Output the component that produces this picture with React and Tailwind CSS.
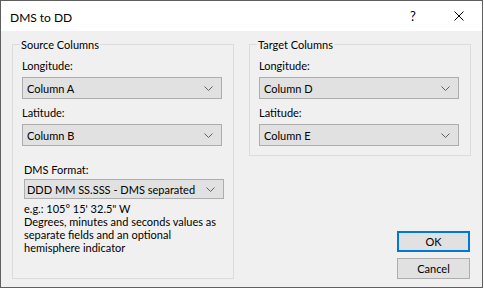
function Chevron() {
  return (
    <svg width="9" height="5" viewBox="0 0 9 5" className="shrink-0">
      <path d="M0.5 0.5 L4.5 4.5 L8.5 0.5" fill="none" stroke="#606060" strokeWidth="1" />
    </svg>
  );
}

function Combo({ value, className = "" }) {
  return (
    <div
      className={`w-[200px] bg-[#e1e1e1] border border-[#adadad] flex items-center justify-between pr-[8px] ${className}`}
    >
      <span className="whitespace-nowrap">{value}</span>
      <Chevron />
    </div>
  );
}

function Group({ title, className = "", children }) {
  return (
    <div className={`relative w-[222px] border border-[#dcdcdc] ${className}`}>
      <span className="absolute top-[-7px] left-[7px] px-[1px] bg-[#f0f0f0] whitespace-nowrap">
        {title}
      </span>
      {children}
    </div>
  );
}

function Field({ label, value, first }) {
  return (
    <div className={`flex flex-col ${first ? "" : "mt-[7px]"}`}>
      <span className="h-[13px]">{label}</span>
      <Combo value={value} className="mt-[5px] h-[22px] pl-[4px]" />
    </div>
  );
}

export default function App() {
  return (
    <div className="w-[484px] h-[289px] bg-white font-['Lato','Noto_Sans',sans-serif] text-[11px] leading-[13px] text-black">
      <div className="w-[483px] h-[288px] border border-[#5f5f5f] flex flex-col bg-[#f0f0f0]">
        <div className="h-[30px] bg-white flex items-center shrink-0">
          <span className="pl-[9px] text-[12px] leading-[15px] pt-[2px]">DMS to DD</span>
          <div className="ml-auto flex h-full">
            <div className="w-[46px] h-full flex items-center justify-center text-[13px] pt-[1px]">?</div>
            <div className="w-[46px] h-full flex items-center justify-center">
              <svg width="10" height="10" viewBox="0 0 10 10">
                <path d="M0.5 0.5 L9.5 9.5 M9.5 0.5 L0.5 9.5" stroke="#000" strokeWidth="1" fill="none" />
              </svg>
            </div>
          </div>
        </div>
        <div className="flex-1 flex pl-[11px] pt-[13px]">
          <Group title="Source Columns" className="h-[235px]">
            <div className="flex flex-col pl-[9px] pt-[14px]">
              <Field label="Longitude:" value="Column A" first />
              <Field label="Latitude:" value="Column B" />
              <div className="flex flex-col ml-[2px] mt-[17px]">
                <span className="h-[13px]">DMS Format:</span>
                <Combo value="DDD MM SS.SSS - DMS separated" className="mt-[3px] h-[20px] pl-[2px]" />
                <div className="mt-[3px] flex flex-col whitespace-nowrap">
                  <span>e.g.: 105° 15' 32.5" W</span>
                  <span>Degrees, minutes and seconds values as</span>
                  <span>separate fields and an optional</span>
                  <span>hemisphere indicator</span>
                </div>
              </div>
            </div>
          </Group>
          <div className="ml-[15px] w-[222px] flex flex-col">
            <Group title="Target Columns" className="h-[112px]">
              <div className="flex flex-col pl-[9px] pt-[14px]">
                <Field label="Longitude:" value="Column D" first />
                <Field label="Latitude:" value="Column E" />
              </div>
            </Group>
            <div className="flex flex-col items-end pr-[1px] mt-[75px]">
              <div className="w-[73px] h-[21px] border-2 border-[#0078d7] bg-[#e1e1e1] flex items-center justify-center">
                OK
              </div>
              <div className="mt-[6px] w-[73px] h-[21px] border border-[#adadad] bg-[#e1e1e1] flex items-center justify-center">
                Cancel
              </div>
            </div>
          </div>
        </div>
      </div>
    </div>
  );
}
